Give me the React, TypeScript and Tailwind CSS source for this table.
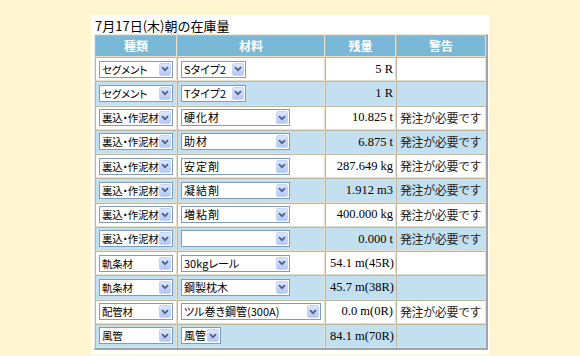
type Row = {
  kind: string;
  mat: string;
  matW: string;
  qty: string;
  qtyLeft?: boolean;
  warn?: boolean;
};

const rows: Row[] = [
  { kind: "セグメント", mat: "Sタイプ2", matW: "w-[65px]", qty: "5 R" },
  { kind: "セグメント", mat: "Tタイプ2", matW: "w-[65px]", qty: "1 R" },
  { kind: "裏込・作泥材", mat: "硬化材", matW: "w-[109px]", qty: "10.825 t", warn: true },
  { kind: "裏込・作泥材", mat: "助材", matW: "w-[109px]", qty: "6.875 t", warn: true },
  { kind: "裏込・作泥材", mat: "安定剤", matW: "w-[109px]", qty: "287.649 kg", warn: true },
  { kind: "裏込・作泥材", mat: "凝結剤", matW: "w-[109px]", qty: "1.912 m3", warn: true },
  { kind: "裏込・作泥材", mat: "増粘剤", matW: "w-[109px]", qty: "400.000 kg", warn: true },
  { kind: "裏込・作泥材", mat: "", matW: "w-[109px]", qty: "0.000 t", warn: true },
  { kind: "軌条材", mat: "30kgレール", matW: "w-[109px]", qty: "54.1 m(45R)", qtyLeft: true },
  { kind: "軌条材", mat: "鋼製枕木", matW: "w-[109px]", qty: "45.7 m(38R)", qtyLeft: true },
  { kind: "配管材", mat: "ツル巻き鋼管(300A)", matW: "w-[140px]", qty: "0.0 m(0R)", warn: true },
  { kind: "風管", mat: "風管", matW: "w-[40px]", qty: "84.1 m(70R)", qtyLeft: true },
];

// XP style drop-down, drawn by hand so it looks the same everywhere
function FakeSelect({ label, width, text, spaced }: { label: string; width: string; text: string; spaced?: boolean }) {
  return (
    <div className={`flex h-[17px] items-center border border-[#7f9db9] bg-white ${width}`}>
      <span
        className={`min-w-0 flex-1 overflow-hidden whitespace-nowrap pl-[2px] leading-[15px] text-black [font-feature-settings:'palt'] ${text} ${spaced ? "tracking-[1px]" : ""}`}
      >
        {label}
      </span>
      <span className="mr-px flex h-[13px] w-[12px] shrink-0 items-center justify-center rounded-[2px] border border-[#c3d3fd] bg-gradient-to-b from-[#dde7fd] to-[#b4c7f5]">
        <svg width="8" height="6" viewBox="0 0 8 6">
          <path d="M1 1.2 L4 4.2 L7 1.2" fill="none" stroke="#4d6185" strokeWidth="1.8" />
        </svg>
      </span>
    </div>
  );
}

const cell = "border border-t-[#bdb59f] border-l-[#bdb59f] border-r-[#e6e0cf] border-b-[#e6e0cf] p-0";

export default function App() {
  return (
    <div className="min-h-screen bg-[#fff5d1] pt-[15px] font-['Noto_Sans_CJK_JP',sans-serif]">
      <div className="mx-auto w-[398px] bg-white pb-[4px] pl-[3px] pr-px">
        <div className="h-[19px] pl-px text-[13px] leading-[22px] text-black">7月17日(木)朝の在庫量</div>

        <table className="w-[394px] table-fixed border-separate border-spacing-0 border border-t-[#ece8dc] border-l-[#ece8dc] border-r-2 border-b-2 border-r-[#a3a3a3] border-b-[#a3a3a3]">
          <thead>
            <tr className="h-[22px] bg-[#7ab8d8] text-[12px] font-bold text-white">
              <th className={`${cell} w-[82px]`}>種類</th>
              <th className={`${cell} w-[148px]`}>材料</th>
              <th className={`${cell} w-[71px]`}>残量</th>
              <th className={cell}>警告</th>
            </tr>
          </thead>
          <tbody>
            {rows.map((r, i) => (
              <tr key={i} className={`h-[24.25px] ${i % 2 === 1 ? "bg-[#c2e0ef]" : "bg-white"}`}>
                <td className={`${cell} pl-[3px]`}>
                  <FakeSelect label={r.kind} width="w-[74px]" text="text-[10.5px] tracking-[-0.2px]" />
                </td>
                <td className={`${cell} pl-[3px]`}>
                  <FakeSelect
                    label={r.mat}
                    width={r.matW}
                    text="text-[11px]"
                    spaced={r.matW === "w-[109px]" && !/\d/.test(r.mat) && r.mat !== "鋼製枕木"}
                  />
                </td>
                <td
                  className={`${cell} whitespace-nowrap font-['Liberation_Serif','Noto_Sans_CJK_JP',serif] text-[12.5px] text-black ${r.qtyLeft ? "pl-[4px] text-left" : "pr-[2px] text-right"}`}
                >
                  {r.qty}
                </td>
                <td className={`${cell} whitespace-nowrap pl-[3px] text-[12px] tracking-[-0.4px] text-[#222]`}>
                  {r.warn ? "発注が必要です" : ""}
                </td>
              </tr>
            ))}
          </tbody>
        </table>
      </div>
    </div>
  );
}
